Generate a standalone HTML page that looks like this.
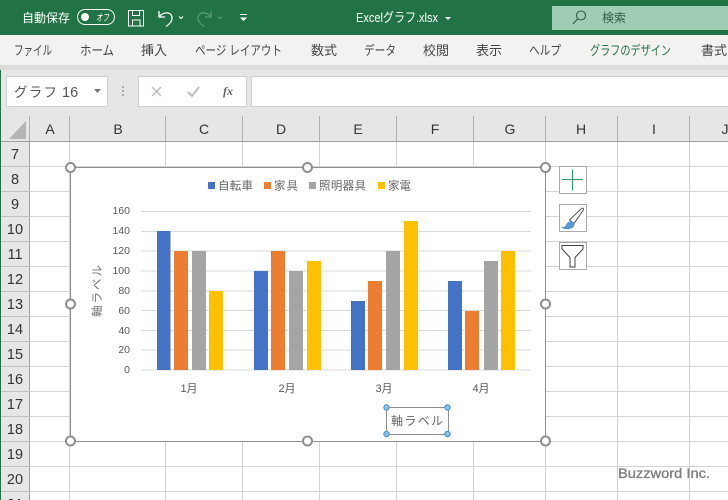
<!DOCTYPE html>
<html lang="ja"><head><meta charset="utf-8"><title>Excel</title>
<style>
html,body{margin:0;padding:0;background:#fff;width:728px;height:500px;overflow:hidden}
svg{display:block}
text{font-family:"Liberation Sans","Noto Sans CJK JP",sans-serif}
.tab{font-size:13px;fill:#444}
.ch{font-size:14px;fill:#333;text-anchor:middle}
.rh{font-size:14.500px;fill:#333;text-anchor:middle}
.y{font-size:10.500px;fill:#595959;text-anchor:end}
.x{font-size:11px;fill:#595959;text-anchor:middle}
.lg{font-size:11.500px;fill:#666}
</style></head><body>
<svg width="728" height="500" viewBox="0 0 728 500" xmlns="http://www.w3.org/2000/svg">
<rect width="728" height="500" fill="#fff"/>
<!-- title bar -->
<rect width="728" height="35" fill="#217346"/>
<text x="22" y="22" font-size="12" fill="#fff" textLength="48" lengthAdjust="spacingAndGlyphs">自動保存</text>
<rect x="77.500" y="9.500" width="37" height="15" rx="7.500" fill="none" stroke="#fff"/>
<circle cx="85" cy="17" r="4" fill="#fff"/>
<text x="96" y="21" font-size="10" fill="#fff" font-style="italic" textLength="13" lengthAdjust="spacingAndGlyphs">オフ</text>
<g fill="none" stroke="#fff" stroke-width="1">
<path d="M128.500 10.500h15v15.500h-15z"/><path d="M132.500 10.500v5h7v-5M132.500 26v-6h7.500v6"/>
<path d="M159 11v6h6M159.500 16.500c4-5 12-5 12.500 1 .5 4-3 7-6 9" stroke-width="1.300"/>
<path d="M179 16.500l2 2 2-2" stroke-width="1"/>
</g>
<g fill="none" stroke="#5d9a7b" stroke-width="1.200">
<path d="M211 11v6h-6M210.500 16.500c-4-5-12-5-12.500 1-.5 4 3 7 6 9"/>
<path d="M218 16.500l2 2 2-2" stroke-width="1"/>
</g>
<path d="M240 14.500h7" stroke="#fff"/><path d="M240 17.500l3.500 3.500 3.500-3.500z" fill="#fff"/>
<text x="356" y="22" font-size="13" fill="#fff" textLength="82" lengthAdjust="spacingAndGlyphs">Excelグラフ.xlsx</text>
<path d="M445 17h6l-3 3z" fill="#fff"/>
<rect x="552" y="6" width="176" height="24" fill="#9fcdb3"/>
<circle cx="581" cy="15.500" r="4.500" fill="none" stroke="#2c5f46" stroke-width="1.100"/>
<path d="M577.500 19l-4.500 5" stroke="#2c5f46" stroke-width="1.200"/>
<text x="602" y="22" font-size="12" fill="#2f5f49" textLength="24" lengthAdjust="spacingAndGlyphs">検索</text>
<!-- ribbon -->
<rect y="35" width="728" height="30" fill="#f3f2f1"/>
<rect y="65" width="728" height="5" fill="#dcdbda"/>
<text class="tab" x="14" y="55" textLength="38" lengthAdjust="spacingAndGlyphs">ファイル</text>
<text class="tab" x="80" y="55" textLength="34" lengthAdjust="spacingAndGlyphs">ホーム</text>
<text class="tab" x="141" y="55" textLength="26" lengthAdjust="spacingAndGlyphs">挿入</text>
<text class="tab" x="195" y="55" textLength="87" lengthAdjust="spacingAndGlyphs">ページ レイアウト</text>
<text class="tab" x="311" y="55" textLength="26" lengthAdjust="spacingAndGlyphs">数式</text>
<text class="tab" x="364" y="55" textLength="32" lengthAdjust="spacingAndGlyphs">データ</text>
<text class="tab" x="423" y="55" textLength="26" lengthAdjust="spacingAndGlyphs">校閲</text>
<text class="tab" x="476" y="55" textLength="26" lengthAdjust="spacingAndGlyphs">表示</text>
<text class="tab" x="529" y="55" textLength="32" lengthAdjust="spacingAndGlyphs">ヘルプ</text>
<text class="tab" x="590" y="55" textLength="81" lengthAdjust="spacingAndGlyphs" style="fill:#217346">グラフのデザイン</text>
<text class="tab" x="701" y="55" textLength="26" lengthAdjust="spacingAndGlyphs">書式</text>
<!-- formula bar -->
<rect y="70" width="728" height="71" fill="#e6e6e6"/>
<rect x="6.500" y="76.500" width="101" height="30" fill="#fff" stroke="#d0d0d0"/>
<text x="14" y="97" font-size="13.500" fill="#555" textLength="43" lengthAdjust="spacing">グラフ</text>
<text x="62" y="97" font-size="14.500" fill="#555">16</text>
<path d="M94 89h7l-3.500 4z" fill="#777"/>
<g fill="#aaa"><rect x="122" y="86" width="2" height="2"/><rect x="122" y="90" width="2" height="2"/><rect x="122" y="94" width="2" height="2"/></g>
<rect x="138.500" y="76.500" width="108" height="30" fill="#fff" stroke="#d0d0d0"/>
<rect x="251.500" y="76.500" width="477" height="30" fill="#fff" stroke="#d0d0d0"/>
<path d="M152 87l9 9M161 87l-9 9" stroke="#bfbfbf" stroke-width="1.500" fill="none"/>
<path d="M188 92l4 4 7-9" stroke="#bfbfbf" stroke-width="2" fill="none"/>
<text x="223" y="95" font-size="12" font-style="italic" font-weight="bold" fill="#666" style='font-family:"Liberation Serif",serif'>fx</text>
<!-- column headers -->
<rect y="116" width="728" height="25" fill="#e6e6e6"/>
<rect y="141" width="30" height="359" fill="#e6e6e6"/>
<path d="M26 121v18h-17z" fill="#b4b4b4"/>
<g stroke="#d4d4d4"><path d="M30 141.500h698M30 166.500h698M30 191.500h698M30 216.500h698M30 241.500h698M30 266.500h698M30 291.500h698M30 316.500h698M30 341.500h698M30 366.500h698M30 391.500h698M30 416.500h698M30 441.500h698M30 466.500h698M30 491.500h698"/>
<path d="M69.500 141v359M165.500 141v359M242.500 141v359M319.500 141v359M396.500 141v359M473.500 141v359M545.500 141v359M617.500 141v359M689.500 141v359"/></g>
<g stroke="#b0b0b0"><path d="M29.500 116v25M69.500 116v25M165.500 116v25M242.500 116v25M319.500 116v25M396.500 116v25M473.500 116v25M545.500 116v25M617.500 116v25M689.500 116v25"/></g>
<path d="M0 141.500h728" stroke="#9e9e9e"/>
<path d="M29.500 141v359" stroke="#9e9e9e"/>
<g stroke="#c0c0c0"><path d="M1 166.500h29M1 191.500h29M1 216.500h29M1 241.500h29M1 266.500h29M1 291.500h29M1 316.500h29M1 341.500h29M1 366.500h29M1 391.500h29M1 416.500h29M1 441.500h29M1 466.500h29M1 491.500h29"/></g>
<rect x="0" y="70" width="1" height="430" fill="#217346"/>
<text class="ch" x="50" y="134">A</text><text class="ch" x="118" y="134">B</text><text class="ch" x="204" y="134">C</text><text class="ch" x="281" y="134">D</text><text class="ch" x="358" y="134">E</text><text class="ch" x="435" y="134">F</text><text class="ch" x="510" y="134">G</text><text class="ch" x="581" y="134">H</text><text class="ch" x="654" y="134">I</text><text class="ch" x="725" y="134">J</text>
<text class="rh" x="15" y="159">7</text><text class="rh" x="15" y="184">8</text><text class="rh" x="15" y="209">9</text><text class="rh" x="15" y="234">10</text><text class="rh" x="15" y="259">11</text><text class="rh" x="15" y="284">12</text><text class="rh" x="15" y="309">13</text><text class="rh" x="15" y="334">14</text><text class="rh" x="15" y="359">15</text><text class="rh" x="15" y="384">16</text><text class="rh" x="15" y="409">17</text><text class="rh" x="15" y="434">18</text><text class="rh" x="15" y="459">19</text><text class="rh" x="15" y="484">20</text><text class="rh" x="15" y="509">21</text>
<!-- chart -->
<rect x="70.500" y="167.500" width="475" height="274" fill="#fff" stroke="#8f8f8f"/>
<rect x="208" y="182" width="7" height="7" fill="#4472c4"/><text class="lg" x="218" y="189.500" textLength="35" lengthAdjust="spacing">自転車</text>
<rect x="264" y="182" width="7" height="7" fill="#ed7d31"/><text class="lg" x="274" y="189.500" textLength="24" lengthAdjust="spacing">家具</text>
<rect x="309" y="182" width="7" height="7" fill="#a5a5a5"/><text class="lg" x="319" y="189.500" textLength="47" lengthAdjust="spacing">照明器具</text>
<rect x="378" y="182" width="7" height="7" fill="#ffc000"/><text class="lg" x="388" y="189.500" textLength="23" lengthAdjust="spacing">家電</text>
<g stroke="#d9d9d9"><path d="M141 211.500h390M141 231.500h390M141 251h390M141 271h390M141 291h390M141 310.500h390M141 330.500h390M141 350h390M141 370h390"/></g>
<g><text class="y" x="130" y="214">160</text><text class="y" x="130" y="234">140</text><text class="y" x="130" y="254">120</text><text class="y" x="130" y="274">100</text><text class="y" x="130" y="294">80</text><text class="y" x="130" y="314">60</text><text class="y" x="130" y="334">40</text><text class="y" x="130" y="353">20</text><text class="y" x="130" y="373">0</text></g>
<text transform="translate(101,317) rotate(-90)" font-size="11.500" fill="#707070" textLength="52" lengthAdjust="spacing">軸ラベル</text>
<g fill="#4472c4"><rect x="157" y="231" width="13.500" height="139"/><rect x="254" y="271" width="14" height="99"/><rect x="351" y="301" width="14" height="69"/><rect x="448" y="281" width="14" height="89"/></g>
<g fill="#ed7d31"><rect x="174" y="251" width="14" height="119"/><rect x="271" y="251" width="14" height="119"/><rect x="368" y="281" width="14" height="89"/><rect x="465" y="311" width="14" height="59"/></g>
<g fill="#a5a5a5"><rect x="192" y="251" width="14" height="119"/><rect x="289" y="271" width="14" height="99"/><rect x="386" y="251" width="14" height="119"/><rect x="484" y="261" width="14" height="109"/></g>
<g fill="#ffc000"><rect x="209" y="291" width="14" height="79"/><rect x="307" y="261" width="14" height="109"/><rect x="404" y="221" width="14" height="149"/><rect x="501" y="251" width="14" height="119"/></g>
<text class="x" x="189" y="392">1月</text><text class="x" x="287" y="392">2月</text><text class="x" x="384" y="392">3月</text><text class="x" x="481" y="392">4月</text>
<!-- selected axis title -->
<rect x="386.500" y="407.500" width="62" height="27" fill="#fff" stroke="#8f8f8f"/>
<text x="391" y="425" font-size="12" fill="#666" textLength="52" lengthAdjust="spacing">軸ラベル</text>
<g fill="#8ec2ea" stroke="#3f8fcf"><circle cx="386.500" cy="407.500" r="2.700"/><circle cx="447.500" cy="407.500" r="2.700"/><circle cx="386.500" cy="434" r="2.700"/><circle cx="447.500" cy="434" r="2.700"/></g>
<!-- chart handles -->
<g fill="#fff" stroke="#8f8f8f" stroke-width="2"><circle cx="70.500" cy="167.500" r="4.500"/><circle cx="307.500" cy="167.500" r="4.500"/><circle cx="545.500" cy="167.500" r="4.500"/><circle cx="70.500" cy="304" r="4.500"/><circle cx="545.500" cy="304" r="4.500"/><circle cx="70.500" cy="441" r="4.500"/><circle cx="307.500" cy="441" r="4.500"/><circle cx="545.500" cy="441" r="4.500"/></g>
<!-- side buttons -->
<rect x="559.500" y="166.500" width="27" height="27" fill="#fff" stroke="#aaa"/>
<path d="M572.500 169.500v21M562 179.500h21" stroke="#2e9b5e" fill="none"/>
<rect x="559.500" y="204.500" width="27" height="27" fill="#fff" stroke="#aaa"/>
<path d="M569.500 220l12-11.500c1.500-1 2.500 0 1.800 1.500l-9.300 13.500z" fill="#fff" stroke="#555"/>
<path d="M561.500 227.500c3 0 4-.5 5-3 1-2.500 4.500-4 7-2 1.500 2 .5 4-1 5-3 2-8 1.500-11 0z" fill="#5b9bd5" stroke="#3f7fbf" stroke-width=".5"/>
<rect x="559.500" y="242.500" width="27" height="27" fill="#fff" stroke="#aaa"/>
<path d="M562 245.500h21v3.500l-8 8.500v9.500h-5v-9.500l-8-8.500z" fill="#fff" stroke="#444"/>
<!-- watermark -->
<text x="618" y="478" font-size="14" fill="#7f7f7f" stroke="#7f7f7f" stroke-width=".35" textLength="92" lengthAdjust="spacingAndGlyphs">Buzzword Inc.</text>
</svg>
</body></html>
